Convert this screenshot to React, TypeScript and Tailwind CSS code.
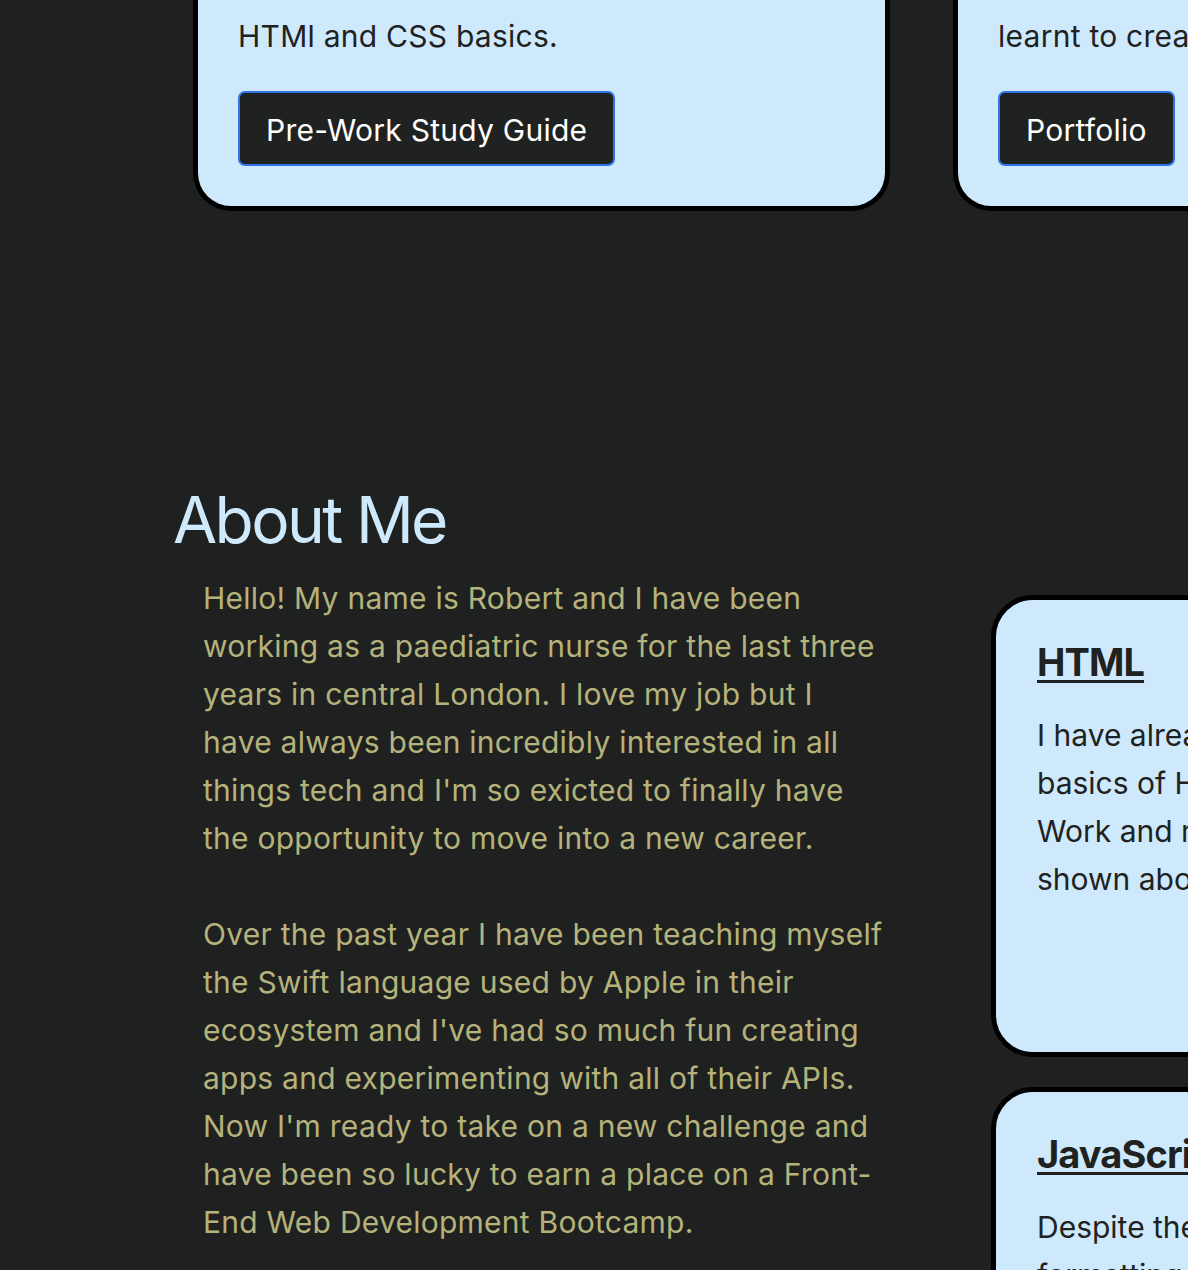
import React from "react";

const aboutLines = [
  "Hello! My name is Robert and I have been",
  "working as a paediatric nurse for the last three",
  "years in central London. I love my job but I",
  "have always been incredibly interested in all",
  "things tech and I'm so exicted to finally have",
  "the opportunity to move into a new career.",
];

const aboutLines2 = [
  "Over the past year I have been teaching myself",
  "the Swift language used by Apple in their",
  "ecosystem and I've had so much fun creating",
  "apps and experimenting with all of their APIs.",
  "Now I'm ready to take on a new challenge and",
  "have been so lucky to earn a place on a Front-",
  "End Web Development Bootcamp.",
];

type SkillProps = {
  title: string;
  lines: string[];
  className?: string;
};

function SkillCard({ title, lines, className = "" }: SkillProps) {
  return (
    <div
      className={`w-[560px] rounded-[42px] border-[5px] border-black bg-[#cfe9fc] pl-[41px] pr-10 pt-[38px] text-[#202221] ${className}`}
    >
      <h3 className="text-[38px] font-bold leading-[48px] tracking-[-0.9px] underline decoration-[3px] underline-offset-[4px]">
        {title}
      </h3>
      <p className="mt-[25px] text-[30px] leading-[48px]">
        {lines.map((l) => (
          <span key={l} className="block whitespace-nowrap">
            {l}
          </span>
        ))}
      </p>
    </div>
  );
}

export default function App() {
  return (
    <div
      className="min-h-[1270px] w-full overflow-hidden bg-[#1f2120]"
      style={{ fontFamily: "Inter, 'Noto Sans', sans-serif" }}
    >
      {/* projects row, scrolled so only the bottom shows */}
      <div className="flex gap-[63px] pl-[193px]">
        <div className="w-[697px] shrink-0 rounded-b-[38px] border-x-[5px] border-b-[5px] border-black bg-[#cfe9fc] px-10 pt-[12px] pb-10">
          <p className="text-[30px] leading-[48px] tracking-[0.25px] text-[#202221]">HTMl and CSS basics.</p>
          <button className="mt-[31px] h-[75px] rounded-[7px] border-2 border-[#2f73e6] bg-[#202221] px-[26px] pt-[3px] text-[30px] tracking-[0.25px] text-white">
            Pre-Work Study Guide
          </button>
        </div>
        <div className="w-[697px] shrink-0 rounded-b-[38px] border-x-[5px] border-b-[5px] border-black bg-[#cfe9fc] px-10 pt-[12px] pb-10">
          <p className="whitespace-nowrap text-[30px] leading-[48px] tracking-[0.25px] text-[#202221]">
            learnt to create a simple portfolio page.
          </p>
          <button className="mt-[31px] h-[75px] rounded-[7px] border-2 border-[#2f73e6] bg-[#202221] px-[26px] pt-[3px] text-[30px] tracking-[0.25px] text-white">
            Portfolio
          </button>
        </div>
      </div>

      {/* about section */}
      <div className="mt-[277px] flex pl-[173px]">
        <div className="w-[818px] shrink-0">
          <h2 className="text-[64px] font-normal leading-[64px] tracking-[-2.6px] text-[#cfe9fc]">
            About Me
          </h2>
          <div className="mt-[22px] pl-[30px] text-[30px] leading-[48px] tracking-[0.25px] text-[#b5b37b]">
            {aboutLines.map((l) => (
              <span key={l} className="block whitespace-nowrap">
                {l}
              </span>
            ))}
            <span className="block h-[48px]" />
            {aboutLines2.map((l) => (
              <span key={l} className="block whitespace-nowrap">
                {l}
              </span>
            ))}
          </div>
        </div>
        <div className="mt-[107px] flex shrink-0 flex-col gap-[30px]">
          <SkillCard
            title="HTML"
            className="h-[462px]"
            lines={[
              "I have already learnt the",
              "basics of HTML in the Pre-",
              "Work and my portfolio",
              "shown above.",
            ]}
          />
          <SkillCard
            title="JavaScript"
            lines={[
              "Despite the basics of",
              "formatting the page I have",
              "not learnt JavaScript yet.",
            ]}
          />
        </div>
      </div>
    </div>
  );
}
